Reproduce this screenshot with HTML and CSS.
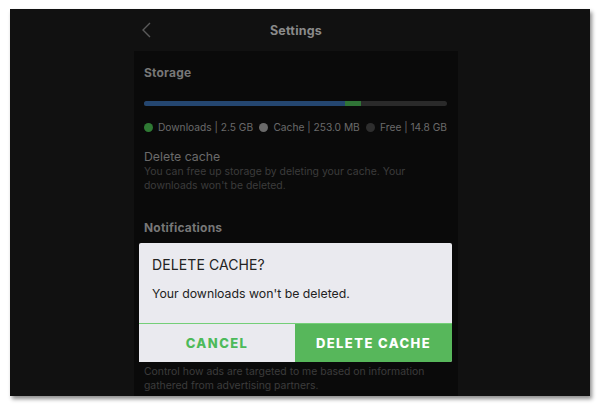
FILE: index.html
```html
<!DOCTYPE html>
<html>
<head>
<meta charset="utf-8">
<link rel="stylesheet" href="styles.css">
</head>
<body>
<div class="frame">
  <div class="column">
    <header class="topbar">
      <svg class="back" width="12" height="16" viewBox="0 0 12 16"><path d="M9 1 L2 8 L9 15" fill="none" stroke="#5a5a5a" stroke-width="1.4"/></svg>
      <div class="title">Settings</div>
    </header>
    <main class="panel">
      <h2 class="heading">Storage</h2>
      <div class="bar">
        <span class="seg seg-dl" style="width:66.5%"></span>
        <span class="seg seg-cache" style="width:5%"></span>
      </div>
      <div class="legend">
        <span class="item"><i class="dot dot-green"></i>Downloads | 2.5 GB</span>
        <span class="item"><i class="dot dot-gray"></i>Cache | 253.0 MB</span>
        <span class="item"><i class="dot dot-dark"></i>Free | 14.8 GB</span>
      </div>
      <div class="row-title">Delete cache</div>
      <p class="row-desc">You can free up storage by deleting your cache. Your downloads won't be deleted.</p>
      <h2 class="heading heading-notif">Notifications</h2>
      <div class="hidden-rows"></div>
      <p class="row-desc">Control how ads are targeted to me based on information gathered from advertising partners.</p>
    </main>
  </div>
  <div class="dialog">
    <div class="dlg-body">
      <div class="dlg-title">DELETE CACHE?</div>
      <div class="dlg-msg">Your downloads won't be deleted.</div>
    </div>
    <div class="dlg-actions">
      <button class="btn btn-cancel">CANCEL</button>
      <button class="btn btn-ok">DELETE CACHE</button>
    </div>
  </div>
</div>
</body>
</html>
```

FILE: styles.css
```css
* { box-sizing: border-box; }
html, body { margin: 0; padding: 0; background: #ffffff; }
body {
  font-family: Inter, "Noto Sans", sans-serif;
  width: 600px;
  height: 407px;
  overflow: hidden;
}
.frame {
  position: relative;
  margin: 9px 0 0 10px;
  width: 580px;
  height: 387px;
  background: #111111;
  box-shadow: 2px 3px 4px rgba(0,0,0,0.45);
  display: flex;
  justify-content: center;
  overflow: visible;
}
.column {
  width: 324px;
  margin-right: 8px;
  display: flex;
  flex-direction: column;
  height: 100%;
}
.topbar {
  height: 42px;
  position: relative;
  display: flex;
  align-items: center;
  justify-content: center;
}
.back {
  position: absolute;
  left: 7px;
  top: 13px;
}
.title {
  color: #8a8a8a;
  font-weight: 700;
  font-size: 12.5px;
  letter-spacing: 0.2px;
}
.panel {
  flex: 1;
  background: #0a0a0a;
  padding: 0 11px 0 10px;
  overflow: hidden;
}
.heading {
  margin: 14px 0 0;
  font-size: 12px;
  line-height: 16px;
  font-weight: 700;
  color: #777777;
  letter-spacing: 0.2px;
}
.heading-notif { margin-top: 27px; }
.bar {
  margin-top: 20px;
  height: 5px;
  border-radius: 3px;
  background: #2a2a2a;
  display: flex;
  overflow: hidden;
}
.seg { display: block; height: 100%; }
.seg-dl { background: #244670; }
.seg-cache { background: #2f7436; }
.legend {
  margin-top: 14px;
  display: flex;
  justify-content: space-between;
  font-size: 10.2px;
  line-height: 14px;
  color: #6a6a6a;
}
.item { display: flex; align-items: center; white-space: nowrap; }
.dot {
  display: inline-block;
  width: 9px;
  height: 9px;
  border-radius: 50%;
  margin-right: 5px;
}
.dot-green { background: #2f7a34; }
.dot-gray { background: #6a6a6a; }
.dot-dark { background: #2e2e2e; }
.row-title {
  margin-top: 15px;
  font-size: 12.3px;
  line-height: 16px;
  color: #6a6a6a;
}
.row-desc {
  margin: 0;
  font-size: 10.4px;
  line-height: 14px;
  color: #3c3c3c;
}
.hidden-rows { height: 129px; }
.dialog {
  position: absolute;
  left: 129px;
  top: 234px;
  width: 313px;
  height: 119px;
  background: #eaeaef;
  border-radius: 2px;
  display: flex;
  flex-direction: column;
}
.dlg-body {
  flex: 1;
  padding: 13px 12px 0 13px;
}
.dlg-title {
  font-size: 14px;
  line-height: 18px;
  color: #222222;
  letter-spacing: 0.1px;
}
.dlg-msg {
  margin-top: 12px;
  font-size: 12.3px;
  line-height: 16px;
  color: #222222;
}
.dlg-actions {
  height: 39px;
  display: flex;
  border-top: 1.5px solid #74cf78;
}
.btn {
  border: none;
  margin: 0;
  font-family: inherit;
  font-weight: 800;
  font-size: 13px;
  letter-spacing: 1.4px;
  padding: 0;
  cursor: pointer;
}
.btn-cancel {
  width: 156px;
  background: #eaeaef;
  color: #4dba5a;
}
.btn-ok {
  flex: 1;
  background: #57b75b;
  color: #ffffff;
  border-radius: 0 0 2px 0;
}
```
